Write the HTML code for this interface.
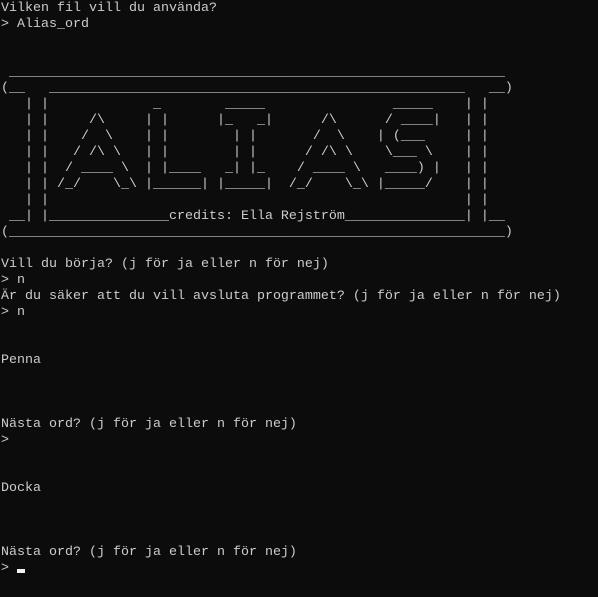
<!DOCTYPE html>
<html><head><meta charset="utf-8"><style>
html,body{margin:0;padding:0;background:#0c0c0c;width:598px;height:597px;overflow:hidden}
pre{margin:0;padding:0 0 0 1px;font-family:"Liberation Mono",monospace;font-size:13.33px;line-height:16px;color:#cccccc;position:relative;top:1px}
.cur{display:inline-block;width:8px;height:4px;background:#f2f2f2;vertical-align:-2px}
</style></head><body><pre>Vilken fil vill du använda?
&gt; Alias_ord


 ______________________________________________________________
(__   ____________________________________________________   __)
   | |             _        _____                _____    | |
   | |     /\     | |      |_   _|      /\      / ____|   | |
   | |    /  \    | |        | |       /  \    | (___     | |
   | |   / /\ \   | |        | |      / /\ \    \___ \    | |
   | |  / ____ \  | |____   _| |_    / ____ \   ____) |   | |
   | | /_/    \_\ |______| |_____|  /_/    \_\ |_____/    | |
   | |                                                    | |
 __| |_______________credits: Ella Rejström_______________| |__
(______________________________________________________________)

Vill du börja? (j för ja eller n för nej)
&gt; n
Är du säker att du vill avsluta programmet? (j för ja eller n för nej)
&gt; n


Penna



Nästa ord? (j för ja eller n för nej)
&gt;


Docka



Nästa ord? (j för ja eller n för nej)
&gt; <span class="cur"></span></pre></body></html>
